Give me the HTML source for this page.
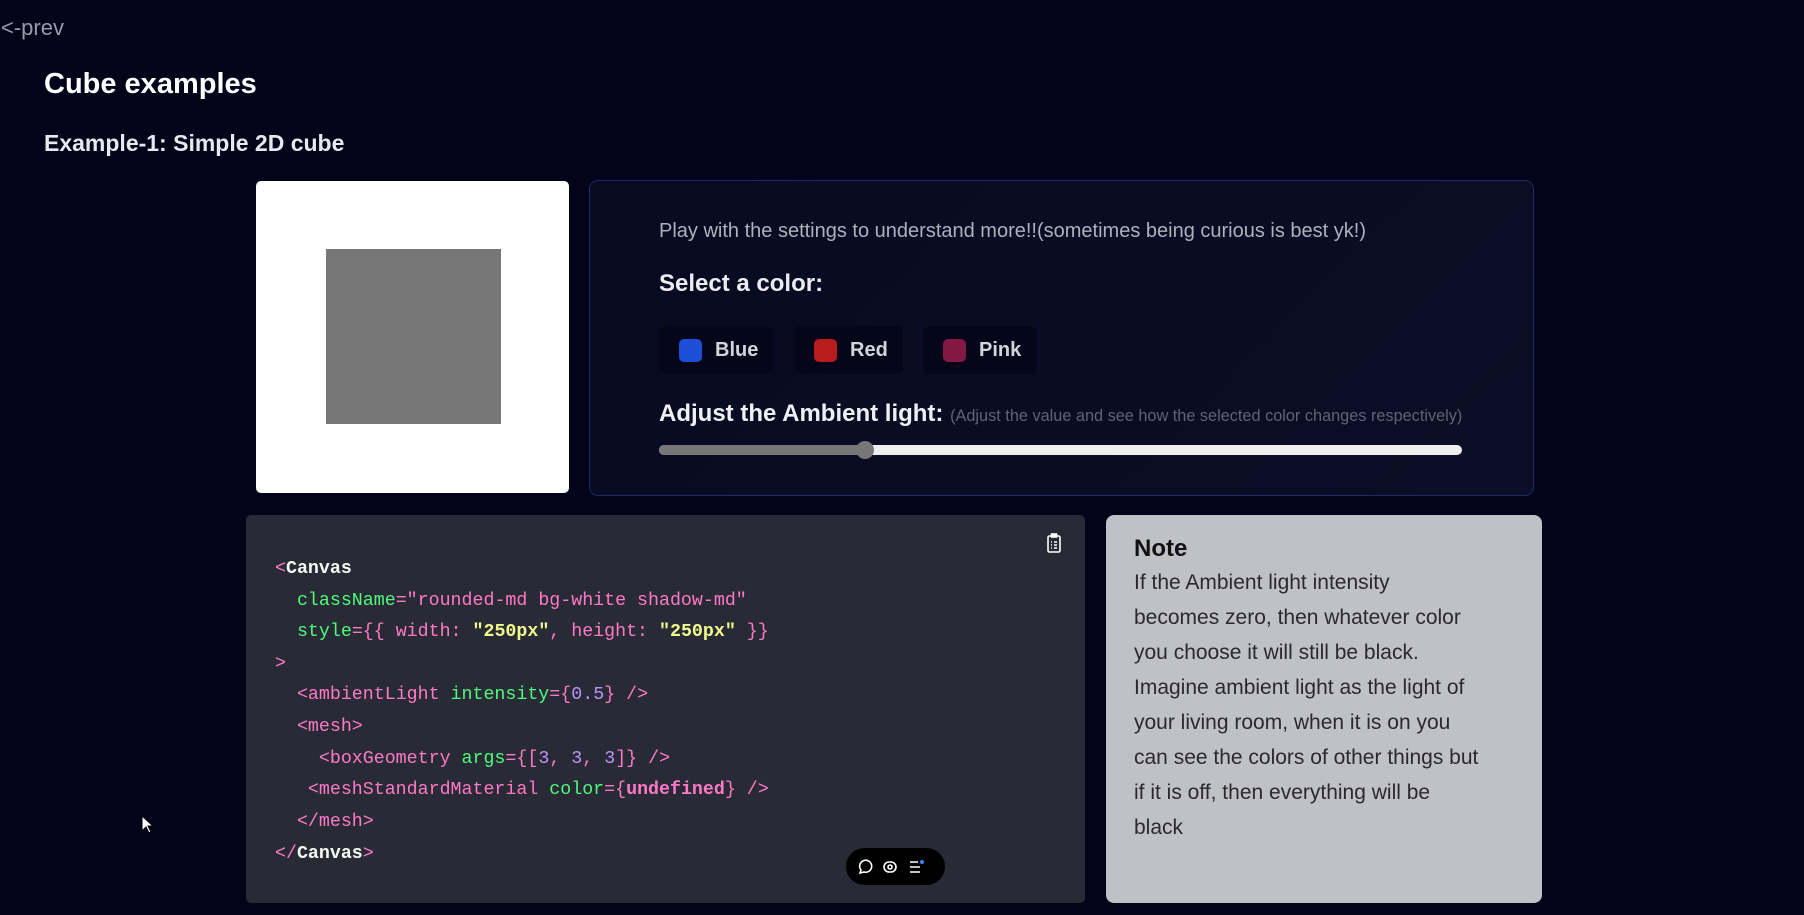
<!DOCTYPE html>
<html><head><meta charset="utf-8"><style>
*{margin:0;padding:0;box-sizing:border-box}
body{width:1804px;height:915px;background:#03041a;font-family:"Liberation Sans",sans-serif;position:relative;overflow:hidden;color:#fff}
.a{position:absolute;white-space:nowrap}
.btn{position:absolute;top:326px;height:48px;background:#05061a;border-radius:7px;display:flex;align-items:center;padding-left:20px;font-weight:bold;font-size:20px;color:#d4d4d8}
.sw{width:23px;height:23px;border-radius:5px;margin-right:13px}
.code{position:absolute;left:246px;top:515px;width:839px;height:388px;background:#282a36;border-radius:5px;font-family:"Liberation Mono",monospace;font-size:18.3px}
.code div{position:absolute;left:29px;white-space:pre;line-height:20px}
.t{color:#ff79c6}.g{color:#50fa7b}.y{color:#f1fa8c;font-weight:bold}.p{color:#bd93f9}.w{color:#f8f8f2;font-weight:bold}
</style></head><body>
<div class="a" style="left:1px;top:15px;font-size:22px;color:#9a9aa6">&lt;-prev</div>
<div class="a" style="left:44px;top:68px;font-size:29px;font-weight:bold">Cube examples</div>
<div class="a" style="left:44px;top:130px;font-size:23px;font-weight:bold;color:#e8e8ee">Example-1: Simple 2D cube</div>

<div class="a" style="left:256px;top:181px;width:313px;height:312px;background:#fff;border-radius:5px"></div>
<div class="a" style="left:326px;top:249px;width:175px;height:175px;background:#777"></div>

<div class="a" style="left:589px;top:180px;width:945px;height:316px;border:1.5px solid #1a2a6a;border-radius:9px;background:linear-gradient(135deg,#080a20,#0b0e26)"></div>
<div class="a" style="left:659px;top:220px;font-size:20px;color:#aeb0bc">Play with the settings to understand more!!(sometimes being curious is best yk!)</div>
<div class="a" style="left:659px;top:270px;font-size:24px;font-weight:bold;color:#ececf2">Select a color:</div>
<div class="btn" style="left:659px;width:114px"><span class="sw" style="background:#1d4ed8"></span>Blue</div>
<div class="btn" style="left:794px;width:109px"><span class="sw" style="background:#b91c1c"></span>Red</div>
<div class="btn" style="left:923px;width:114px"><span class="sw" style="background:#831843"></span>Pink</div>
<div class="a" style="left:659px;top:400px;font-size:24px;font-weight:bold;color:#f0f0f4">Adjust the Ambient light: <span style="font-size:16.3px;font-weight:normal;color:#5f6375">(Adjust the value and see how the selected color changes respectively)</span></div>
<div class="a" style="left:659px;top:445px;width:803px;height:10px;border-radius:5px;background:#eee"></div>
<div class="a" style="left:659px;top:445px;width:206px;height:10px;border-radius:5px 0 0 5px;background:#777"></div>
<div class="a" style="left:856px;top:441px;width:18px;height:18px;border-radius:50%;background:#777"></div>

<div class="code">
<div style="top:44px"><span class="t">&lt;</span><span class="w">Canvas</span></div>
<div style="top:76px">  <span class="g">className</span><span class="t">="rounded-md bg-white shadow-md"</span></div>
<div style="top:107px">  <span class="g">style</span><span class="t">={{ width: </span><span class="y">"250px"</span><span class="t">, height: </span><span class="y">"250px"</span><span class="t"> }}</span></div>
<div style="top:139px"><span class="t">&gt;</span></div>
<div style="top:170px">  <span class="t">&lt;ambientLight </span><span class="g">intensity</span><span class="t">={</span><span class="p">0.5</span><span class="t">} /&gt;</span></div>
<div style="top:202px">  <span class="t">&lt;mesh&gt;</span></div>
<div style="top:234px">    <span class="t">&lt;boxGeometry </span><span class="g">args</span><span class="t">={[</span><span class="p">3</span><span class="t">, </span><span class="p">3</span><span class="t">, </span><span class="p">3</span><span class="t">]} /&gt;</span></div>
<div style="top:265px">   <span class="t">&lt;meshStandardMaterial </span><span class="g">color</span><span class="t">={<b>undefined</b>} /&gt;</span></div>
<div style="top:297px">  <span class="t">&lt;/mesh&gt;</span></div>
<div style="top:329px"><span class="t">&lt;/</span><span class="w">Canvas</span><span class="t">&gt;</span></div>
</div>
<svg class="a" style="left:1046px;top:533px" width="16" height="20" viewBox="0 0 16 20" fill="none" stroke="#fff" stroke-width="1.6"><rect x="2" y="3" width="12" height="16" rx="1.5"/><rect x="5.5" y="1" width="5" height="3" fill="#fff"/><path d="M5 9h1M8 9h3M5 12h1M8 12h3M5 15h1M8 15h3"/></svg>
<div class="a" style="left:846px;top:848px;width:99px;height:37px;background:#000;border-radius:19px"></div>
<svg class="a" style="left:856px;top:857px" width="80" height="20" viewBox="0 0 80 20" fill="none" stroke="#fff" stroke-width="1.6"><path d="M4 16l1-3a6 6 0 1 1 3 2z"/><rect x="28" y="5" width="12" height="10" rx="5"/><circle cx="34" cy="10" r="2"/><path d="M54 5h8M54 10h10M54 15h10"/><circle cx="66" cy="5" r="2" fill="#3b82f6" stroke="none"/></svg>

<div class="a" style="left:1106px;top:515px;width:436px;height:388px;background:#c0c1c6;border-radius:8px"></div>
<div class="a" style="left:1134px;top:535px;font-size:24px;font-weight:bold;color:#111">Note</div>
<div class="a" style="left:1134px;top:565px;font-size:21px;line-height:35px;color:#2a2a2e">If the Ambient light intensity<br>becomes zero, then whatever color<br>you choose it will still be black.<br>Imagine ambient light as the light of<br>your living room, when it is on you<br>can see the colors of other things but<br>if it is off, then everything will be<br>black</div>

<svg class="a" style="left:141px;top:815px" width="14" height="20" viewBox="0 0 14 20"><path d="M1 1v15l4-4 3 6 2-1-3-6h5z" fill="#fff" stroke="#000"/></svg>
</body></html>
